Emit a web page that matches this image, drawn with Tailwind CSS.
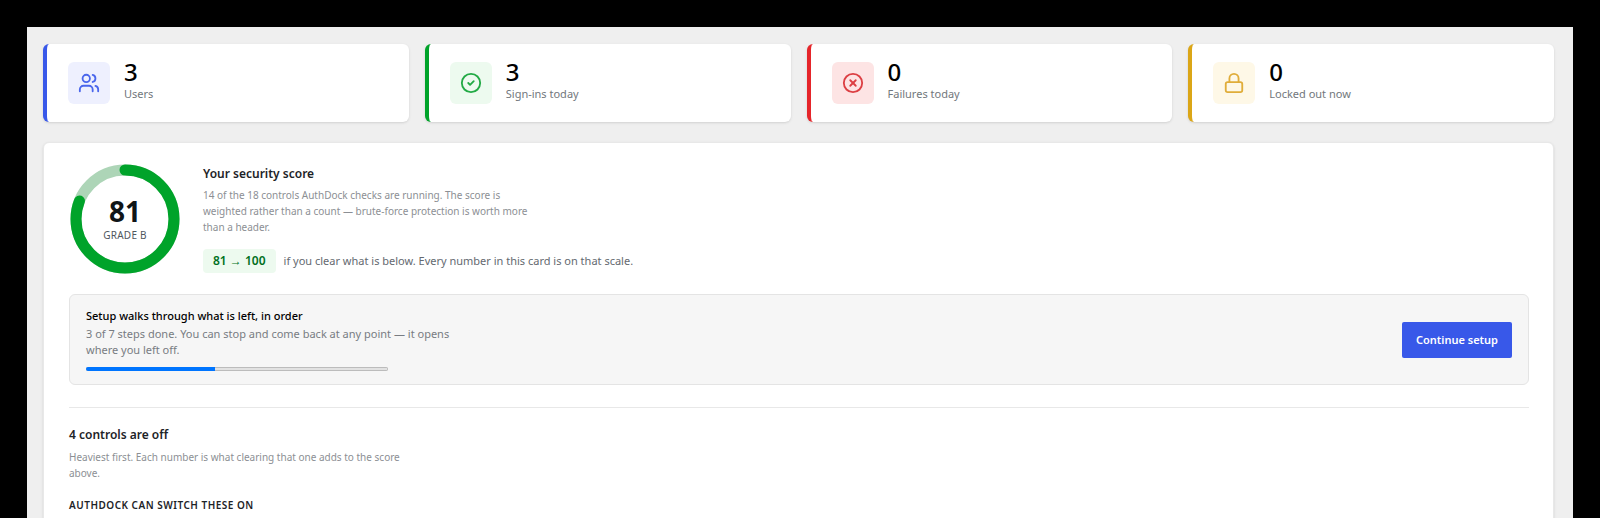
<!DOCTYPE html>
<html lang="en">
<head>
    <meta charset="UTF-8">
    <meta name="viewport" content="width=device-width, initial-scale=1.0">
    <title>AuthDock - Security overview</title>
    <script src="https://cdn.jsdelivr.net/npm/@tailwindcss/browser@4"></script>
</head>
<body class="h-screen overflow-hidden bg-black px-[27px] pt-[27px] font-['Segoe_UI','Noto_Sans','Open_Sans',sans-serif] text-[11px] text-[#1d2327]">

    <main class="min-h-full bg-[#efefef] pt-[17px] pr-[19px] pl-4">

        <!-- Stat cards -->
        <section class="grid grid-cols-4 gap-4">
            <div class="flex items-center gap-3.5 rounded-md border-l-4 border-[#3858e9] bg-white px-[21px] py-[18px] shadow-sm">
                <div class="flex size-[42px] items-center justify-center rounded-md bg-[#eef0fe] text-[#4a66ec]">
                    <svg class="size-[22px]" viewBox="0 0 24 24" fill="none" stroke="currentColor" stroke-width="2" stroke-linecap="round" stroke-linejoin="round">
                        <path d="M16 21v-2a4 4 0 0 0-4-4H6a4 4 0 0 0-4 4v2"/>
                        <circle cx="9" cy="7" r="4"/>
                        <path d="M22 21v-2a4 4 0 0 0-3-3.87"/>
                        <path d="M16 3.13a4 4 0 0 1 0 7.75"/>
                    </svg>
                </div>
                <div class="pb-0.5">
                    <div class="text-2xl/5 font-medium text-black">3</div>
                    <div class="mt-1 text-[11px]/4 text-[#72777c]">Users</div>
                </div>
            </div>
            <div class="flex items-center gap-3.5 rounded-md border-l-4 border-[#00a32a] bg-white px-[21px] py-[18px] shadow-sm">
                <div class="flex size-[42px] items-center justify-center rounded-md bg-[#edfaef] text-[#22aa45]">
                    <svg class="size-[22px]" viewBox="0 0 24 24" fill="none" stroke="currentColor" stroke-width="2" stroke-linecap="round" stroke-linejoin="round">
                        <circle cx="12" cy="12" r="10"/>
                        <path d="m9 12 2 2 4-4"/>
                    </svg>
                </div>
                <div class="pb-0.5">
                    <div class="text-2xl/5 font-medium text-black">3</div>
                    <div class="mt-1 text-[11px]/4 text-[#72777c]">Sign-ins today</div>
                </div>
            </div>
            <div class="flex items-center gap-3.5 rounded-md border-l-4 border-[#e5252a] bg-white px-[21px] py-[18px] shadow-sm">
                <div class="flex size-[42px] items-center justify-center rounded-md bg-[#fde4e4] text-[#dc3f43]">
                    <svg class="size-[22px]" viewBox="0 0 24 24" fill="none" stroke="currentColor" stroke-width="2" stroke-linecap="round" stroke-linejoin="round">
                        <circle cx="12" cy="12" r="10"/>
                        <path d="m15 9-6 6"/>
                        <path d="m9 9 6 6"/>
                    </svg>
                </div>
                <div class="pb-0.5">
                    <div class="text-2xl/5 font-medium text-black">0</div>
                    <div class="mt-1 text-[11px]/4 text-[#72777c]">Failures today</div>
                </div>
            </div>
            <div class="flex items-center gap-3.5 rounded-md border-l-4 border-[#dba617] bg-white px-[21px] py-[18px] shadow-sm">
                <div class="flex size-[42px] items-center justify-center rounded-md bg-[#fef8e7] text-[#e0ad3a]">
                    <svg class="size-[22px]" viewBox="0 0 24 24" fill="none" stroke="currentColor" stroke-width="2" stroke-linecap="round" stroke-linejoin="round">
                        <rect x="3" y="11" width="18" height="11" rx="2"/>
                        <path d="M7 11V7a5 5 0 0 1 10 0v4"/>
                    </svg>
                </div>
                <div class="pb-0.5">
                    <div class="text-2xl/5 font-medium text-black">0</div>
                    <div class="mt-1 text-[11px]/4 text-[#72777c]">Locked out now</div>
                </div>
            </div>
        </section>

        <!-- Security score -->
        <section class="mt-5 rounded-md border border-[#e8e8e8] bg-white pt-5 pr-6 pb-8 pl-[25px] shadow-sm">
            <div class="flex items-center gap-[22px]">
                <div class="grid size-28 place-items-center">
                    <svg class="col-start-1 row-start-1 size-28 -rotate-90" viewBox="0 0 112 112" fill="none" stroke-width="11">
                        <circle cx="56" cy="56" r="49" stroke="#add5b7"/>
                        <circle cx="56" cy="56" r="49" stroke="#00a32a" stroke-linecap="round" pathLength="100" stroke-dasharray="81 100"/>
                    </svg>
                    <div class="col-start-1 row-start-1 text-center">
                        <div class="text-[28px]/8 font-bold text-[#101517]">81</div>
                        <div class="text-[10px]/4 tracking-wide text-[#50575e]">GRADE B</div>
                    </div>
                </div>
                <div class="pb-0.5">
                    <h2 class="text-xs/5 font-semibold">Your security score</h2>
                    <p class="mt-[3px] max-w-[340px] text-[10px]/4 text-[#8c8f94]">14 of the 18 controls AuthDock checks are running. The score is weighted rather than a count — brute-force protection is worth more than a header.</p>
                    <div class="mt-3.5 flex items-center gap-2">
                        <span class="rounded-sm bg-[#edfaef] px-2.5 py-1 text-xs/4 font-semibold text-[#00701d]">81 → 100</span>
                        <span class="text-[11px]/4 text-[#646970]">if you clear what is below. Every number in this card is on that scale.</span>
                    </div>
                </div>
            </div>

            <div class="mt-[19px] flex items-center justify-between rounded-md border border-[#e4e4e4] bg-[#f6f6f6] px-4 py-[13px]">
                <div>
                    <h3 class="text-[11px]/4 font-medium text-black" id="setup-title">Setup walks through what is left, in order</h3>
                    <p class="mt-0.5 max-w-[380px] text-[11px]/4 text-[#787c82]">3 of 7 steps done. You can stop and come back at any point — it opens where you left off.</p>
                    <progress class="mt-[9px] block h-1 w-[302px] appearance-none overflow-hidden rounded-full [&::-webkit-progress-bar]:bg-[#e2e2e2] [&::-webkit-progress-bar]:inset-ring [&::-webkit-progress-bar]:inset-ring-[#bcbcbc] [&::-webkit-progress-value]:bg-[#0075ff]" value="3" max="7" aria-labelledby="setup-title"></progress>
                </div>
                <button type="button" class="rounded-xs bg-[#3858e9] px-3.5 py-2.5 text-[11px]/4 font-semibold text-white">Continue setup</button>
            </div>

            <div class="mt-[22px] border-t border-[#e8e8e8] pt-[17px]">
                <h2 class="text-xs/5 font-semibold">4 controls are off</h2>
                <p class="mt-1 max-w-[340px] text-[10px]/4 text-[#8c8f94]">Heaviest first. Each number is what clearing that one adds to the score above.</p>
                <h3 class="mt-4 text-[10px]/4 font-semibold tracking-wider">AUTHDOCK CAN SWITCH THESE ON</h3>
            </div>
        </section>
    </main>

</body>
</html>
